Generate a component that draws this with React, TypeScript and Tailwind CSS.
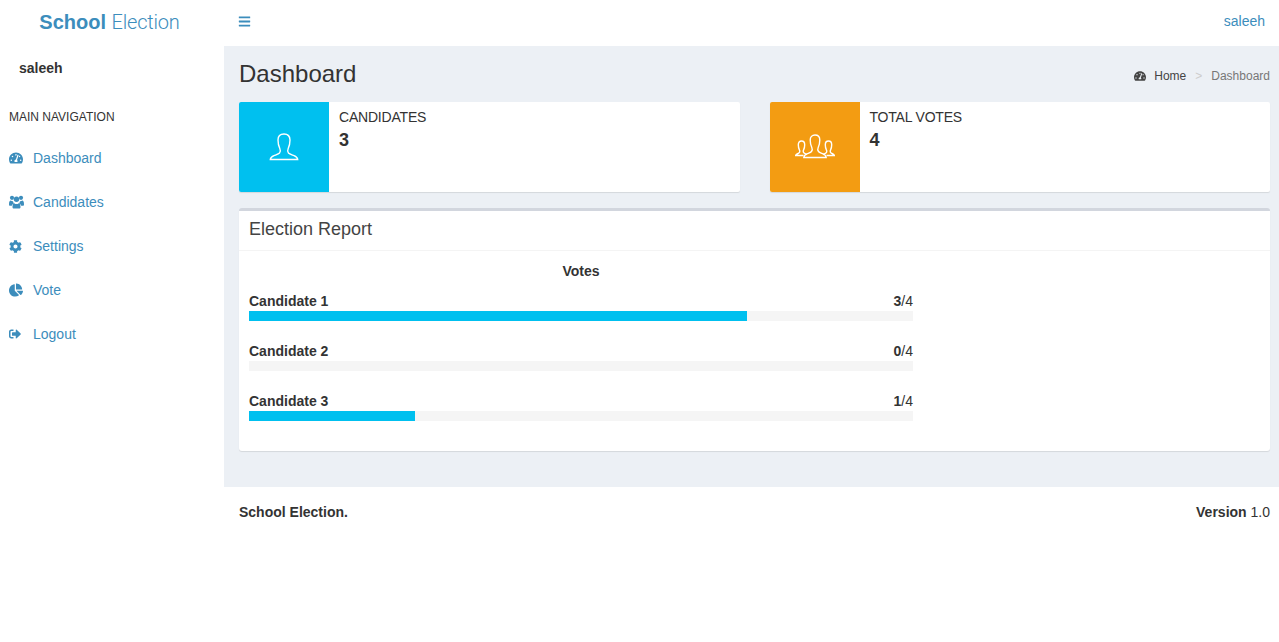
import { FaCog, FaChartPie, FaSignOutAlt, FaTachometerAlt, FaBars } from "react-icons/fa"

function UsersIcon() {
  return (
    <svg width="15" height="14" viewBox="0 0 15 14" fill="currentColor">
      <circle cx="3" cy="2.800" r="2.100" />
      <circle cx="12" cy="2.800" r="2.100" />
      <circle cx="7.500" cy="4.300" r="2.700" />
      <path d="M0 9.200C0 6.800.7 5.600 1.700 5.600c.8.500 1.500.7 2.300.6.100 1 .5 1.800 1.100 2.400C3.800 9 3 9.800 2.800 10.800H1C.4 10.800 0 10.300 0 9.200z" />
      <path d="M15 9.200c0-2.400-.7-3.600-1.700-3.600-.8.500-1.500.7-2.300.6-.1 1-.5 1.800-1.100 2.400 1.300.4 2.100 1.200 2.300 2.200H14c.6 0 1-.5 1-1.600z" />
      <path d="M3.500 12c0-2.200.7-3.800 1.800-3.800.6.600 1.300.9 2.200.9s1.600-.3 2.200-.9c1.100 0 1.800 1.600 1.800 3.800 0 1-.6 1.600-1.500 1.600H5c-.9 0-1.500-.6-1.500-1.600z" />
    </svg>
  )
}

const navItems = [
  { label: "Dashboard", icon: <FaTachometerAlt size={14} /> },
  { label: "Candidates", icon: <UsersIcon /> },
  { label: "Settings", icon: <FaCog size={13} /> },
  { label: "Vote", icon: <FaChartPie size={14} /> },
  { label: "Logout", icon: <FaSignOutAlt size={12} /> },
]

const results = [
  { name: "Candidate 1", votes: 3, width: 75 },
  { name: "Candidate 2", votes: 0, width: 0 },
  { name: "Candidate 3", votes: 1, width: 25 },
]

function PersonOutline() {
  return (
    <svg width="30" height="30" viewBox="0 0 30 30" fill="none" stroke="white" strokeWidth="1.4">
      <path d="M15 1c-4 0-6 2.500-6 6 0 3 .6 6 1.800 8.500.8 1.700.6 3.300-.3 4.500-.9 1.100-3 1.700-5.500 2.700-2 .8-3.500 1.500-3.700 3.800h27.400c-.2-2.300-1.700-3-3.700-3.800-2.500-1-4.600-1.600-5.500-2.700-.9-1.200-1.100-2.800-.3-4.500C20.400 13 21 10 21 7c0-3.500-2-6-6-6z" />
    </svg>
  )
}

function PeopleOutline() {
  return (
    <svg width="40" height="28" viewBox="0 0 40 28" fill="none" stroke="white" strokeWidth="1.4">
      <path d="M20 1c-3 0-4.800 2-4.800 5 0 3 .6 5.500 1.600 7.500.7 1.500.5 3-.3 4-.8 1-2.600 1.500-4.500 2.300-1.700.7-3 1.400-3.200 3.700h22.400c-.2-2.300-1.500-3-3.200-3.700-1.900-.8-3.700-1.300-4.500-2.300-.8-1-1-2.500-.3-4 1-2 1.600-4.500 1.600-7.500 0-3-1.800-5-4.800-5z" />
      <path d="M12 20.500c-1-.5-2.800-1-3.300-1.800-.5-.8-.6-1.800-.1-2.800.7-1.500 1.100-3.300 1.100-5.200 0-2.100-1.200-3.700-3.200-3.700S3.300 8.600 3.300 10.700c0 1.900.4 3.700 1.100 5.200.5 1 .4 2-.1 2.800-.5.800-2.800 1-3.800 2.800h8" />
      <path d="M28 20.500c1-.5 2.800-1 3.300-1.800.5-.8.600-1.800.1-2.800-.7-1.500-1.100-3.300-1.100-5.200 0-2.100 1.200-3.700 3.200-3.700s3.200 1.600 3.200 3.700c0 1.900-.4 3.700-1.100 5.200-.5 1-.4 2 .1 2.800.5.800 2.800 1 3.800 2.800h-8" />
    </svg>
  )
}

function StatBox({ title, value, color, children }: { title: string; value: number; color: string; children: React.ReactNode }) {
  return (
    <div className="flex h-[90px] flex-1 overflow-hidden rounded-[2px] bg-white shadow-[0_1px_1px_rgba(0,0,0,0.1)]">
      <div className={`flex w-[90px] items-center justify-center pt-[2px] ${color}`}>{children}</div>
      <div className="px-[10px] pt-[5px]">
        <div className="text-[14px] leading-[20px] tracking-[-0.2px]">{title}</div>
        <div className="text-[18px] font-bold leading-[26px]">{value}</div>
      </div>
    </div>
  )
}

export default function App() {
  return (
    <div className="min-h-[642px] bg-white font-['Liberation_Sans',Arial,sans-serif] text-[14px] text-[#333]">
      <div className="flex">
        <aside className="w-[224px] shrink-0">
          <div className="h-[46px] pr-[5px] text-center text-[20px] leading-[44px] text-[#3c8dbc]">
            <b>School</b> <span className="font-['Roboto',sans-serif] font-light tracking-[-0.2px]">Election</span>
          </div>
          <div className="px-[19px] pt-[13px] text-[14px] font-bold leading-[18px]">saleeh</div>
          <div className="pl-[9px] pt-[32px] text-[12px] leading-[16px]">MAIN NAVIGATION</div>
          <nav className="pt-[11px]">
            {navItems.map(({ label, icon }) => (
              <a key={label} className="flex h-[44px] items-center text-[14px] text-[#3c8dbc]">
                <span className="flex w-[33px] justify-start pl-[9px]">{icon}</span>
                {label}
              </a>
            ))}
          </nav>
        </aside>

        <div className="min-w-0 flex-1">
          <header className="flex h-[46px] items-center justify-between pb-[4px] pl-[14px] pr-[14px] text-[#3c8dbc]">
            <FaBars size={13} />
            <span className="text-[14px]">saleeh</span>
          </header>

          <main className="h-[441px] bg-[#ecf0f5] pl-[15px] pr-[9px]">
            <div className="flex h-[56px] items-center justify-between">
              <h1 className="text-[24px] leading-[56px]">Dashboard</h1>
              <div className="flex items-center pt-[3px] text-[12px] text-[#444]">
                <FaTachometerAlt size={12} />
                <span className="ml-[8px]">Home</span>
                <span className="mx-[9px] text-[#ccc]">&gt;</span>
                <span className="text-[#777]">Dashboard</span>
              </div>
            </div>

            <div className="flex gap-[30px]">
              <StatBox title="CANDIDATES" value={3} color="bg-[#00c0ef]">
                <PersonOutline />
              </StatBox>
              <StatBox title="TOTAL VOTES" value={4} color="bg-[#f39c12]">
                <PeopleOutline />
              </StatBox>
            </div>

            <section className="mt-[16px] h-[243px] rounded-[3px] border-t-[3px] border-[#d2d6de] bg-white shadow-[0_1px_1px_rgba(0,0,0,0.1)]">
              <div className="h-[40px] border-b border-[#f4f4f4] px-[10px] text-[18px] leading-[36px] text-[#444]">
                Election Report
              </div>
              <div className="w-[684px] px-[10px] pt-[10px]">
                <div className="text-center font-bold leading-[20px]">Votes</div>
                <div className="flex flex-col gap-[20px] pt-[10px]">
                  {results.map((row) => (
                    <div key={row.name}>
                      <div className="flex justify-between leading-[20px]">
                        <b>{row.name}</b>
                        <span>
                          <b>{row.votes}</b>/4
                        </span>
                      </div>
                      <div className="h-[10px] bg-[#f5f5f5]">
                        <div className={`h-full bg-[#00c0ef] ${row.width === 75 ? "w-[75%]" : row.width === 25 ? "w-[25%]" : "w-0"}`} />
                      </div>
                    </div>
                  ))}
                </div>
              </div>
            </section>
          </main>

          <footer className="flex h-[50px] items-center justify-between pl-[15px] pr-[9px]">
            <b>School Election.</b>
            <span>
              <b>Version</b> 1.0
            </span>
          </footer>
        </div>
      </div>
    </div>
  )
}
